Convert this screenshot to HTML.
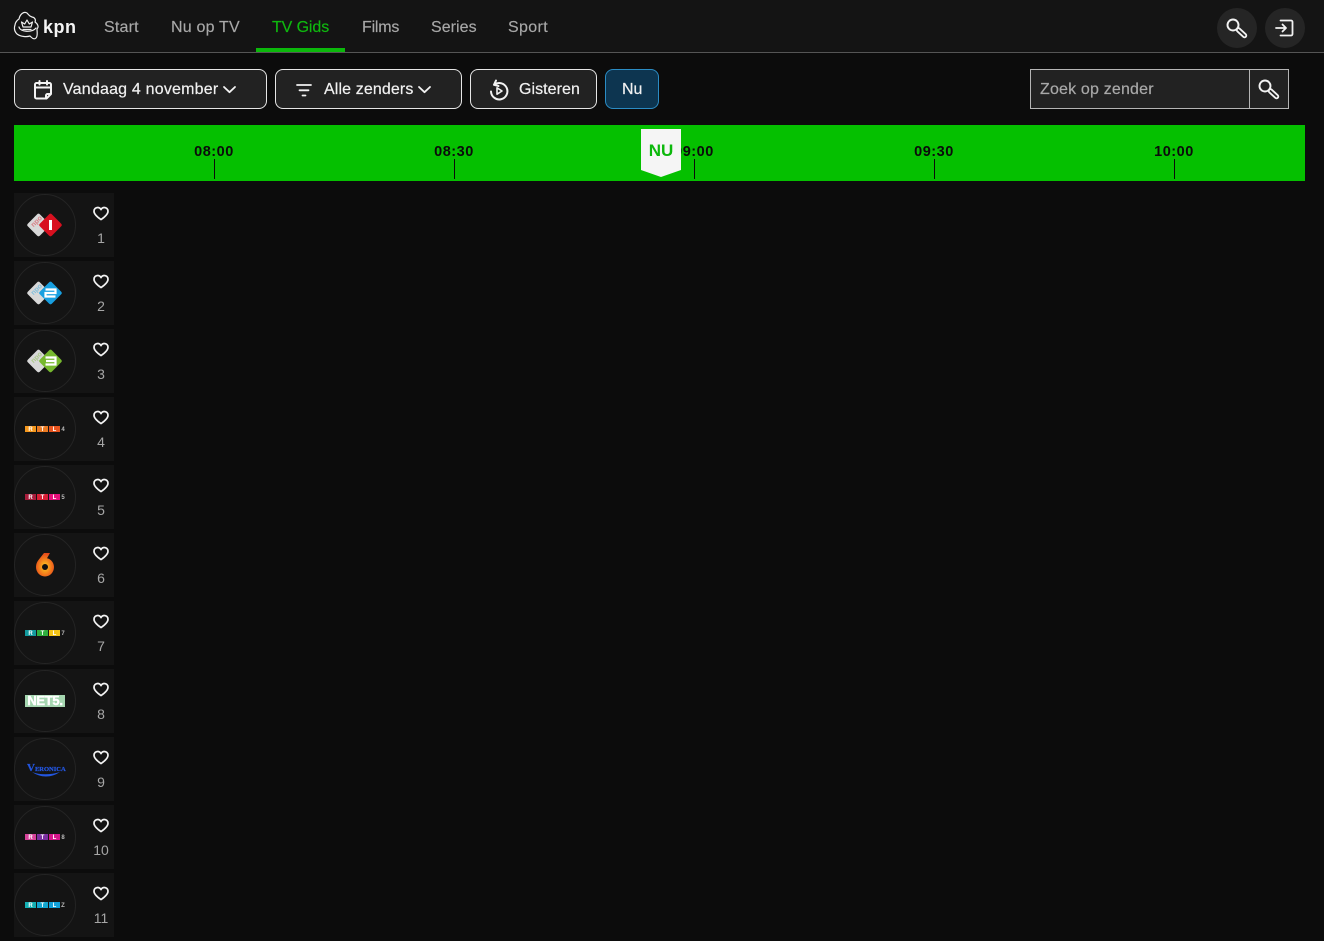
<!DOCTYPE html>
<html lang="nl"><head><meta charset="utf-8"><title>TV Gids</title>
<style>
*{box-sizing:border-box}
html,body{margin:0;padding:0;width:1324px;height:941px;overflow:hidden;background:#0c0c0c;font-family:"Liberation Sans",sans-serif}
.a{position:absolute;white-space:nowrap}
#hd{position:absolute;left:0;top:0;width:1324px;height:53px;background:#141414;border-bottom:1px solid #555}
.nav{position:absolute;top:18px;font-size:16px;line-height:20px;color:#a8a8a8;white-space:nowrap;-webkit-text-stroke:.15px currentColor}
.btn{position:absolute;top:69px;height:40px;background:#222;border:1px solid #e6e6e6;border-radius:8px}
.lbl{position:absolute;top:80px;font-size:16px;line-height:20px;color:#f0f0f0;white-space:nowrap;-webkit-text-stroke:.2px currentColor}
.rnd{position:absolute;top:8px;width:40px;height:40px;border-radius:50%;background:#252525}
#bar{position:absolute;left:14px;top:125px;width:1291px;height:56px;background:#05c000}
.t{position:absolute;top:144px;width:60px;text-align:center;font-size:14.5px;line-height:16px;font-weight:700;color:#0b0b0b;letter-spacing:.55px}
.k{position:absolute;top:159px;width:1px;height:20px;background:#0b0b0b}
.row{position:absolute;left:14px;width:100px;height:64px;background:#141414}
.c{position:absolute;left:0;top:1px;width:62px;height:62px;border:1px solid #242424;border-radius:50%}
.row svg{position:absolute}
.h{left:79px;top:12.500px}
.n{position:absolute;left:67px;width:40px;top:36px;text-align:center;font-size:14px;line-height:18px;color:#a6a6a6}
.npo{font-family:"Liberation Sans",sans-serif;font-size:7px;font-weight:700;opacity:.45}
.rtl{font-family:"Liberation Sans",sans-serif;font-size:6px;font-weight:700;text-anchor:middle;fill:#fff}
</style></head><body>
<div id="hd"></div>
<svg class="a" style="left:13px;top:11px" width="28" height="30" viewBox="0 0 28 30" fill="none" stroke="#f0f0f0" stroke-width="1.2" stroke-linecap="round" stroke-linejoin="round"><path d="M6 8C7 3 11 0 14 2c2 2 2 3 5 4 3 .5 4 3 3 5 3 2 4 5 2 7 0 3 1 7-1 9-2 2-4 0-6-2-3 1-9 1-13-2-3-3-3-6-2-9 0-2 2-5 4-6z"/><path d="M10 16l-1.500-5 3.200 2 2.300-4 2.300 4 3.200-2-1.500 5zM10 18.500h8"/><path d="M6 16c1 5 13 6 17 1"/></svg>
<div class="a" style="left:43px;top:16px;font-size:18px;line-height:22px;font-weight:700;color:#f4f4f4;letter-spacing:.5px">kpn</div>
<div class="nav" style="left:104px;letter-spacing:.2px">Start</div>
<div class="nav" style="left:171px;letter-spacing:.2px">Nu op TV</div>
<div class="nav" style="left:272px;color:#0fb80f;letter-spacing:-.1px">TV Gids</div>
<div class="nav" style="left:362px;letter-spacing:-.2px">Films</div>
<div class="nav" style="left:431px;letter-spacing:.05px">Series</div>
<div class="nav" style="left:508px;letter-spacing:.35px">Sport</div>
<div class="a" style="left:256px;top:48px;width:89px;height:4px;background:#0bb80b"></div>
<div class="rnd" style="left:1217px"></div>
<div class="rnd" style="left:1265px"></div>
<svg class="a" style="left:1225px;top:17px" width="24" height="24" viewBox="0 0 24 24" fill="none" stroke-linecap="round"><circle cx="8" cy="8" r="5.5" stroke="#f2f2f2" stroke-width="1.9"/><path d="M13.500 13L19.500 18.500" stroke="#f2f2f2" stroke-width="5.400"/><path d="M13.500 13L19.500 18.500" stroke="#252525" stroke-width="1.800"/></svg>
<svg class="a" style="left:1274px;top:17px" width="22" height="22" viewBox="0 0 22 22" fill="none" stroke="#f2f2f2" stroke-width="1.8" stroke-linecap="round" stroke-linejoin="round"><path d="M2 11h10M8.500 7.500L12 11l-3.500 3.500"/><path d="M6.500 3.500h10.500a1.500 1.500 0 0 1 1.500 1.500v12a1.500 1.500 0 0 1-1.500 1.500H6.500"/></svg>

<div class="btn" style="left:14px;width:253px"></div>
<svg class="a" style="left:32px;top:79px" width="22" height="22" viewBox="0 0 22 22" fill="none" stroke="#f2f2f2" stroke-width="2" stroke-linejoin="round" stroke-linecap="round"><path d="M3 5.500a1.500 1.500 0 0 1 1.500-1.500h13a1.500 1.500 0 0 1 1.500 1.500V15l-4.500 4.500H4.500A1.500 1.500 0 0 1 3 18zM3 8.500h16M7.500 2v3.500M15 2v3.500M14 19.500v-3a1.500 1.500 0 0 1 1.500-1.500H19"/></svg>
<div class="lbl" style="left:63px;letter-spacing:.2px">Vandaag 4 november</div>
<svg class="a" style="left:222px;top:84px" width="15" height="11" viewBox="0 0 15 11" fill="none" stroke="#f2f2f2" stroke-width="1.800" stroke-linecap="round" stroke-linejoin="round"><path d="M2 3l5.500 5.200L13 3"/></svg>
<div class="btn" style="left:275px;width:187px"></div>
<svg class="a" style="left:294px;top:80px" width="20" height="20" viewBox="0 0 20 20" fill="none" stroke="#f2f2f2" stroke-width="1.800" stroke-linecap="round"><path d="M3 5h14M5.500 10.300h9M8.500 15.500h3"/></svg>
<div class="lbl" style="left:324px;letter-spacing:.12px">Alle zenders</div>
<svg class="a" style="left:417px;top:84px" width="15" height="11" viewBox="0 0 15 11" fill="none" stroke="#f2f2f2" stroke-width="1.800" stroke-linecap="round" stroke-linejoin="round"><path d="M2 3l5.500 5.200L13 3"/></svg>
<div class="btn" style="left:470px;width:127px"></div>
<svg class="a" style="left:488px;top:79px" width="22" height="22" viewBox="0 0 22 22" fill="none" stroke="#f2f2f2" stroke-width="2" stroke-linecap="round" stroke-linejoin="round"><path d="M6.500 5.500A8.200 8.200 0 1 1 3 12.500M8 1.500L6 5.800l4.500 1.200"/><path d="M9 8.800l5 3.200-5 3.200z" stroke-width="1.600"/></svg>
<div class="lbl" style="left:519px;letter-spacing:.06px">Gisteren</div>
<div class="btn" style="left:605px;width:54px;background:#0d3550;border-color:#2b8cc4"></div>
<div class="lbl" style="left:622px">Nu</div>

<div class="a" style="left:1030px;top:69px;width:259px;height:40px;background:#222;border:1px solid #b5b5b5"></div>
<div class="a" style="left:1249px;top:69px;width:1px;height:40px;background:#b5b5b5"></div>
<div class="lbl" style="left:1040px;color:#a8a8a8;letter-spacing:.18px">Zoek op zender</div>
<svg class="a" style="left:1257px;top:78px" width="24" height="24" viewBox="0 0 24 24" fill="none" stroke-linecap="round"><circle cx="8" cy="8" r="5.5" stroke="#f2f2f2" stroke-width="1.9"/><path d="M13.500 13L19.500 18.500" stroke="#f2f2f2" stroke-width="5.400"/><path d="M13.500 13L19.500 18.500" stroke="#222" stroke-width="1.800"/></svg>

<div id="bar"></div>
<div class="t" style="left:184px">08:00</div><div class="k" style="left:214px"></div>
<div class="t" style="left:424px">08:30</div><div class="k" style="left:454px"></div>
<div class="t" style="left:664px">09:00</div><div class="k" style="left:694px"></div>
<div class="t" style="left:904px">09:30</div><div class="k" style="left:934px"></div>
<div class="t" style="left:1144px">10:00</div><div class="k" style="left:1174px"></div>
<svg class="a" style="left:641px;top:129px" width="40" height="48" viewBox="0 0 40 48"><path d="M0 0h40v41l-20 7-20-7z" fill="#f5f5f5"/></svg>
<div class="a" style="left:641px;top:142px;width:40px;text-align:center;font-size:17px;line-height:18px;font-weight:700;color:#0cb80c">NU</div>

<svg width="0" height="0" style="position:absolute"><defs><symbol id="ht" viewBox="0 0 16 15"><path d="M8 13.600C4 10.800 1 8.200 1 5.200 1 3 2.700 1.500 4.600 1.500 6 1.500 7.300 2.300 8 3.600 8.700 2.300 10 1.500 11.400 1.500 13.300 1.500 15 3 15 5.200c0 3-3 5.600-7 8.400z" fill="none" stroke="#f2f2f2" stroke-width="1.700" stroke-linejoin="round"/></symbol></defs></svg>

<div class="row" style="top:193px"><div class="c"></div>
<svg style="left:11px;top:18px" width="40" height="28" viewBox="0 0 40 28"><rect x="5" y="5.500" width="17" height="17" rx="2" transform="rotate(45 13.500 14)" fill="#d8d8d8"/><rect x="17" y="5.500" width="17" height="17" rx="2" transform="rotate(45 25.500 14)" fill="#d8101f"/><rect x="24" y="9" width="3" height="10" fill="#fff"/><text class="npo" x="5" y="12" fill="#d8101f" transform="rotate(-45 12 10)">npo</text></svg>
<svg class="h" width="16" height="15"><use href="#ht"/></svg><div class="n">1</div></div>

<div class="row" style="top:261px"><div class="c"></div>
<svg style="left:11px;top:18px" width="40" height="28" viewBox="0 0 40 28"><rect x="5" y="5.500" width="17" height="17" rx="2" transform="rotate(45 13.500 14)" fill="#d8d8d8"/><rect x="17" y="5.500" width="17" height="17" rx="2" transform="rotate(45 25.500 14)" fill="#189fe0"/><path d="M20.500 10.500h10v3.500h-10v3.500h10" fill="none" stroke="#fff" stroke-width="2.200"/><text class="npo" x="5" y="12" fill="#189fe0" transform="rotate(-45 12 10)">npo</text></svg>
<svg class="h" width="16" height="15"><use href="#ht"/></svg><div class="n">2</div></div>

<div class="row" style="top:329px"><div class="c"></div>
<svg style="left:11px;top:18px" width="40" height="28" viewBox="0 0 40 28"><rect x="5" y="5.500" width="17" height="17" rx="2" transform="rotate(45 13.500 14)" fill="#d8d8d8"/><rect x="17" y="5.500" width="17" height="17" rx="2" transform="rotate(45 25.500 14)" fill="#76b82e"/><path d="M20.500 10.500h10v7h-10M21 14h9" fill="none" stroke="#fff" stroke-width="2.200"/><text class="npo" x="5" y="12" fill="#76b82e" transform="rotate(-45 12 10)">npo</text></svg>
<svg class="h" width="16" height="15"><use href="#ht"/></svg><div class="n">3</div></div>

<div class="row" style="top:397px"><div class="c"></div>
<svg style="left:10px;top:28px" width="42" height="8" viewBox="0 0 42 8"><rect x="1" y="1" width="11" height="6" fill="#f5981d"/><rect x="13" y="1" width="11" height="6" fill="#ea7a22"/><rect x="25" y="1" width="11" height="6" fill="#e8551f"/><text class="rtl" x="6.500" y="6.200">R</text><text class="rtl" x="18.500" y="6.200">T</text><text class="rtl" x="30.500" y="6.200">L</text><text class="rtl" x="39" y="6.200" style="fill:#bbb">4</text></svg>
<svg class="h" width="16" height="15"><use href="#ht"/></svg><div class="n">4</div></div>

<div class="row" style="top:465px"><div class="c"></div>
<svg style="left:10px;top:28px" width="42" height="8" viewBox="0 0 42 8"><rect x="1" y="1" width="11" height="6" fill="#a81d3c"/><rect x="13" y="1" width="11" height="6" fill="#d81f36"/><rect x="25" y="1" width="11" height="6" fill="#e5107c"/><text class="rtl" x="6.500" y="6.200">R</text><text class="rtl" x="18.500" y="6.200">T</text><text class="rtl" x="30.500" y="6.200">L</text><text class="rtl" x="39" y="6.200" style="fill:#bbb">5</text></svg>
<svg class="h" width="16" height="15"><use href="#ht"/></svg><div class="n">5</div></div>

<div class="row" style="top:533px"><div class="c"></div>
<svg style="left:21px;top:19px" width="20" height="26" viewBox="0 0 20 26"><defs><radialGradient id="g6" cx=".5" cy=".58" r=".6"><stop offset=".2" stop-color="#fbb01f"/><stop offset=".6" stop-color="#f2761c"/><stop offset="1" stop-color="#e2431a"/></radialGradient></defs><path d="M9 1h6l-3 5.200c4 .8 7 4.500 7 8.800a9 9.500 0 0 1-18 0c0-3 1-5 2.500-7z" fill="url(#g6)"/><circle cx="10" cy="15" r="3" fill="#111"/></svg>
<svg class="h" width="16" height="15"><use href="#ht"/></svg><div class="n">6</div></div>

<div class="row" style="top:601px"><div class="c"></div>
<svg style="left:10px;top:28px" width="42" height="8" viewBox="0 0 42 8"><rect x="1" y="1" width="11" height="6" fill="#129a9e"/><rect x="13" y="1" width="11" height="6" fill="#2fae3e"/><rect x="25" y="1" width="11" height="6" fill="#f3c417"/><text class="rtl" x="6.500" y="6.200">R</text><text class="rtl" x="18.500" y="6.200">T</text><text class="rtl" x="30.500" y="6.200">L</text><text class="rtl" x="39" y="6.200" style="fill:#bbb">7</text></svg>
<svg class="h" width="16" height="15"><use href="#ht"/></svg><div class="n">7</div></div>

<div class="row" style="top:669px"><div class="c"></div>
<div class="a" style="left:11px;top:26px;width:40px;height:12px;background:#a5d6b0;color:#fff;font-size:13px;line-height:12px;font-weight:700;text-align:center;letter-spacing:-.3px;-webkit-text-stroke:.4px #fff">NET5.</div>
<svg class="h" width="16" height="15"><use href="#ht"/></svg><div class="n">8</div></div>

<div class="row" style="top:737px"><div class="c"></div>
<div class="a" style="left:13px;top:25px;width:36px;text-align:center;color:#2356e0;font-family:'Liberation Serif',serif;font-size:6.500px;line-height:12px;font-weight:700;-webkit-text-stroke:.25px #2356e0"><span style="font-size:11px">V</span>ERONICA</div>
<svg style="left:17px;top:34px" width="30" height="6" viewBox="0 0 30 6"><path d="M1 1c8 3 18 3 28 0-9 6-19 6-28 0z" fill="#2356e0"/></svg>
<svg class="h" width="16" height="15"><use href="#ht"/></svg><div class="n">9</div></div>

<div class="row" style="top:805px"><div class="c"></div>
<svg style="left:10px;top:28px" width="42" height="8" viewBox="0 0 42 8"><rect x="1" y="1" width="11" height="6" fill="#d6439a"/><rect x="13" y="1" width="11" height="6" fill="#7a2f9e"/><rect x="25" y="1" width="11" height="6" fill="#d5168c"/><text class="rtl" x="6.500" y="6.200">R</text><text class="rtl" x="18.500" y="6.200">T</text><text class="rtl" x="30.500" y="6.200">L</text><text class="rtl" x="39" y="6.200" style="fill:#bbb">8</text></svg>
<svg class="h" width="16" height="15"><use href="#ht"/></svg><div class="n">10</div></div>

<div class="row" style="top:873px"><div class="c"></div>
<svg style="left:10px;top:28px" width="42" height="8" viewBox="0 0 42 8"><rect x="1" y="1" width="11" height="6" fill="#14b0b4"/><rect x="13" y="1" width="11" height="6" fill="#12a6cf"/><rect x="25" y="1" width="11" height="6" fill="#12a0d8"/><text class="rtl" x="6.500" y="6.200">R</text><text class="rtl" x="18.500" y="6.200">T</text><text class="rtl" x="30.500" y="6.200">L</text><text class="rtl" x="39" y="6.200" style="fill:#bbb">Z</text></svg>
<svg class="h" width="16" height="15"><use href="#ht"/></svg><div class="n">11</div></div>
</body></html>
